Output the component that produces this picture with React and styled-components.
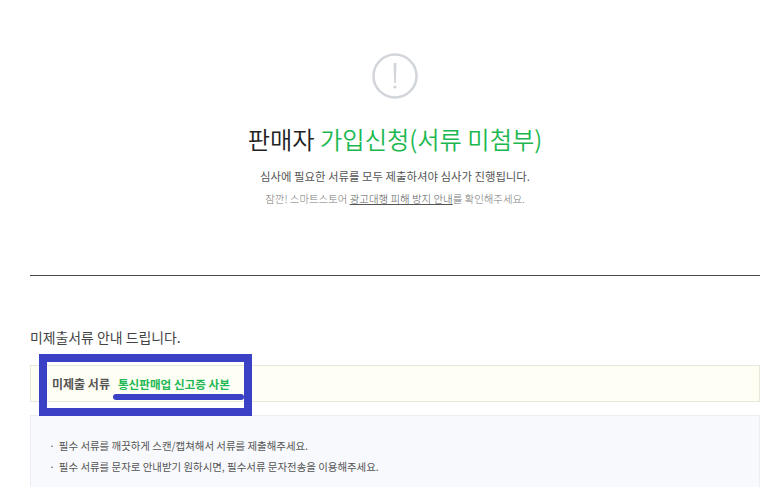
import styled, { createGlobalStyle } from 'styled-components'

const GlobalStyle = createGlobalStyle`
  html, body {
    margin: 0;
    height: 487px;
    overflow: hidden;
    background: #fff;
    font-family: "Noto Sans CJK KR", "Noto Sans", sans-serif;
  }
`

const Page = styled.div`
  width: 730px;
  margin-left: 30px;
  height: 487px;
  overflow: hidden;
`

const Hero = styled.section`
  height: 276px;
  border-bottom: 1px solid #4a4a4a;
  padding-top: 53px;
  box-sizing: border-box;
  display: flex;
  flex-direction: column;
  align-items: center;
`

const Title = styled.h1`
  margin: 24px 0 0;
  font-size: 24.25px;
  line-height: 32px;
  font-weight: 350;
  color: #222;
`

const Green = styled.span`
  color: #1bb84f;
`

const Lead = styled.p`
  margin: 12px 0 0;
  font-size: 11.4px;
  line-height: 18px;
  font-weight: 400;
  color: #555;
`

const Sub = styled.p`
  margin: 6px 0 0;
  font-size: 10.45px;
  line-height: 16px;
  font-weight: 300;
  color: #777;

  & a {
    color: #555;
    text-decoration: underline;
  }
`

const Heading = styled.h2`
  margin: 51px 0 0;
  font-size: 13.9px;
  line-height: 20px;
  font-weight: 400;
  color: #444;
`

const Notice = styled.div`
  position: relative;
  margin-top: 18px;
  height: 35px;
  box-sizing: content-box;
  border: 1px solid #e8e7dc;
  background: #fffef4;
  display: flex;
  align-items: center;
  gap: 8px;
  padding-left: 21px;
  font-weight: 700;
`

const NoticeLabel = styled.span`
  font-size: 12px;
  color: #555;
`

const NoticeValue = styled.span`
  font-size: 11.6px;
  color: #1eb854;
`

const Annotation = styled.div`
  position: absolute;
  left: 8px;
  top: -12px;
  width: 197px;
  height: 46px;
  border: 8px solid #3b41c5;
`

const Scribble = styled.div`
  position: absolute;
  left: 82px;
  top: 28px;
  width: 131px;
  height: 6px;
  border-radius: 3px;
  background: #3b41c5;
`

const Info = styled.ul`
  margin: 13px 0 0;
  padding: 19px 18px 0;
  list-style: none;
  height: 80px;
  border: 1px solid #eceef3;
  background: #f8f9fc;
`

const InfoItem = styled.li`
  font-size: 10.45px;
  line-height: 21px;
  color: #555;

  &::before {
    content: "·";
    margin-right: 4px;
  }
`

const AlertIcon = () => (
  <svg width="46" height="46" viewBox="0 0 46 46" fill="none">
    <circle cx="23" cy="23" r="21.5" stroke="#d2d5da" strokeWidth="2.5" />
    <path d="M21.5 10h3l-.7 20h-1.6z" fill="#d2d5da" />
    <circle cx="23" cy="34" r="1.6" fill="#d2d5da" />
  </svg>
)

const App = () => (
  <>
    <GlobalStyle />
    <Page>
      <Hero>
        <AlertIcon />
        <Title>
          판매자 <Green>가입신청(서류 미첨부)</Green>
        </Title>
        <Lead>심사에 필요한 서류를 모두 제출하셔야 심사가 진행됩니다.</Lead>
        <Sub>
          잠깐! 스마트스토어 <a>광고대행 피해 방지 안내</a>를 확인해주세요.
        </Sub>
      </Hero>
      <Heading>미제출서류 안내 드립니다.</Heading>
      <Notice>
        <NoticeLabel>미제출 서류</NoticeLabel>
        <NoticeValue>통신판매업 신고증 사본</NoticeValue>
        <Annotation />
        <Scribble />
      </Notice>
      <Info>
        <InfoItem>필수 서류를 깨끗하게 스캔/캡쳐해서 서류를 제출해주세요.</InfoItem>
        <InfoItem>필수 서류를 문자로 안내받기 원하시면, 필수서류 문자전송을 이용해주세요.</InfoItem>
      </Info>
    </Page>
  </>
)

export default App
